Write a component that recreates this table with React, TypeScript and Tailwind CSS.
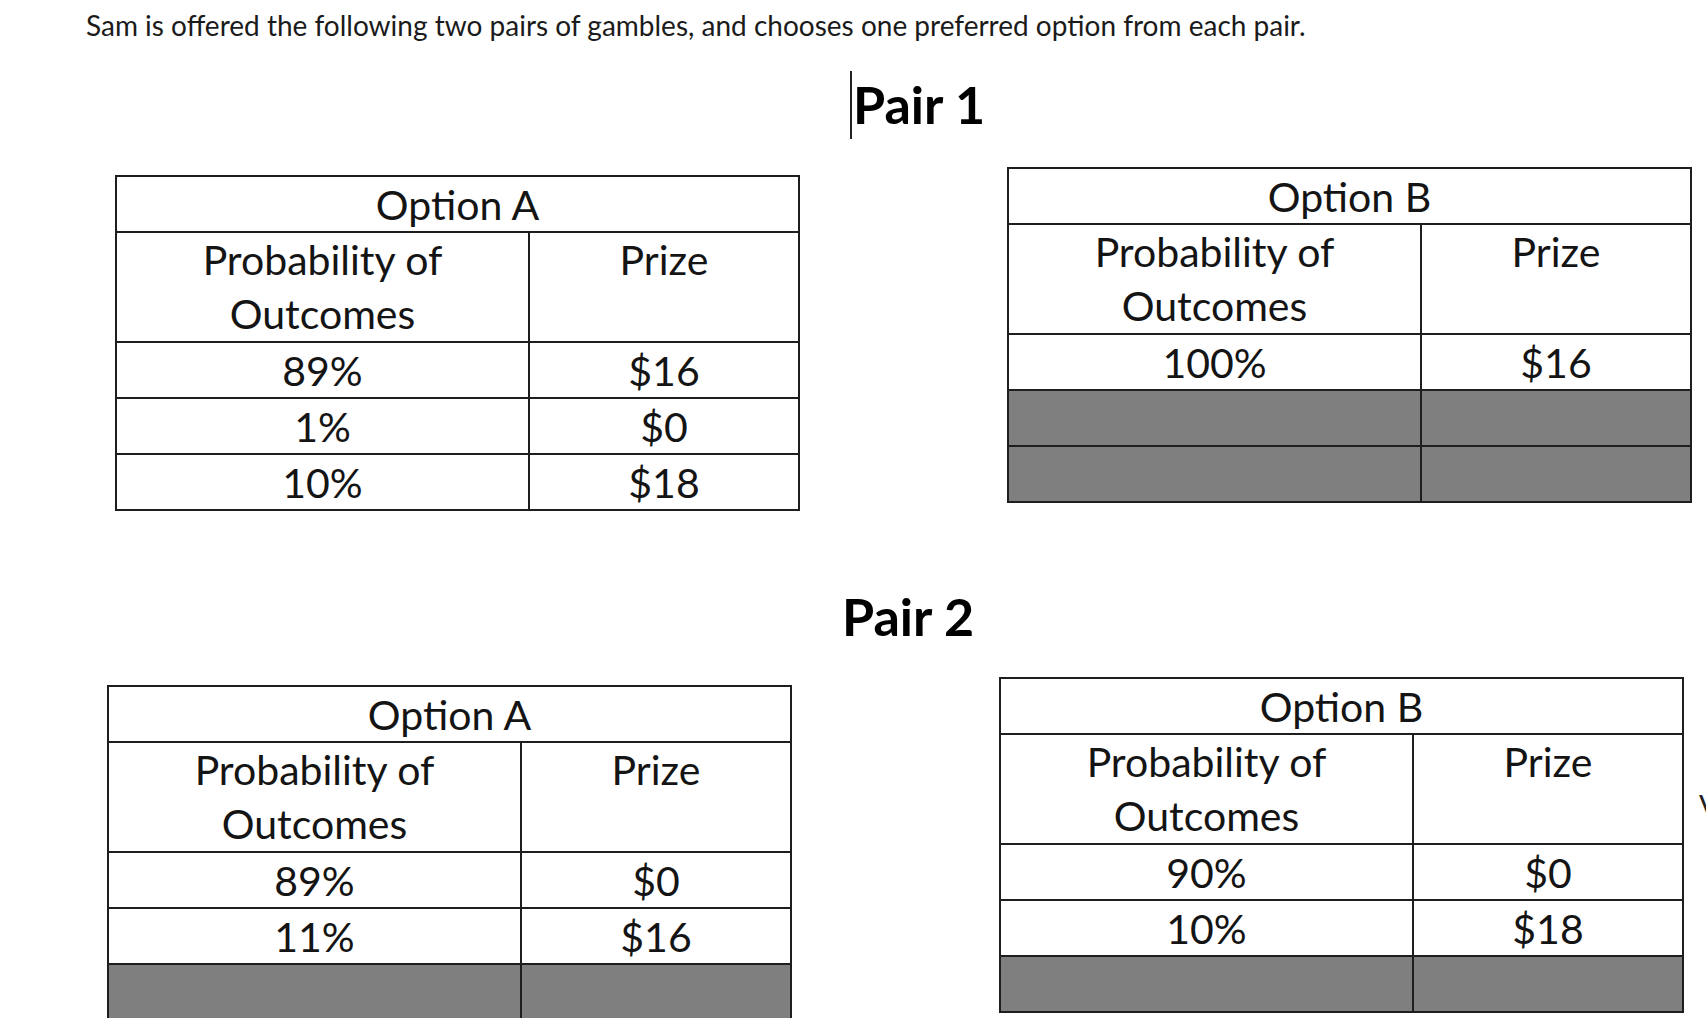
import React from "react";

type Row = { p: string; z: string; grey?: boolean };

function GambleTable({ title, rows, className }: { title: string; rows: Row[]; className?: string }) {
  return (
    <div
      className={`w-[685px] shrink-0 border-2 border-[#1e1e1e] text-[#141414] text-[41px] font-['Lato',sans-serif] ${className ?? ""}`}
    >
      <div className="h-[56px] flex items-center justify-center border-b-2 border-[#1e1e1e] leading-none">
        {title}
      </div>
      <div className="flex h-[110px] border-b-2 border-[#1e1e1e]">
        <div className="w-[413px] border-r-2 border-[#1e1e1e] text-center leading-[54px]">
          Probability of
          <br />
          Outcomes
        </div>
        <div className="flex-1 text-center leading-[54px]">Prize</div>
      </div>
      {rows.map((r, i) => (
        <div
          key={i}
          className={`flex ${i < rows.length - 1 ? "h-[56px] border-b-2 border-[#1e1e1e]" : "h-[54px]"} ${
            r.grey ? "bg-[#7f7f7f]" : "bg-white"
          }`}
        >
          <div className="w-[413px] border-r-2 border-[#1e1e1e] flex items-center justify-center leading-none">
            {r.p}
          </div>
          <div className="flex-1 flex items-center justify-center leading-none">{r.z}</div>
        </div>
      ))}
    </div>
  );
}

export default function App() {
  return (
    <div className="relative w-[1706px] h-[1018px] overflow-hidden bg-white text-[#111]">
      <p className="pt-[8px] pl-[86px] text-[28px] leading-[34px] font-['Lato',sans-serif] text-[#1b1b1b]">
        Sam is offered the following two pairs of gambles, and chooses one preferred option from each pair.
      </p>

      <div className="mt-[29px] flex items-start pl-[850px]">
        <div className="w-[2px] h-[68px] bg-[#222]" />
        <div className="mt-[7px] ml-[1px] text-[52px] leading-[52px] font-bold font-['Lato',sans-serif] text-black">
          Pair 1
        </div>
      </div>

      <div className="mt-[28px] flex items-start">
        <GambleTable
          className="mt-[8px] ml-[115px]"
          title="Option A"
          rows={[
            { p: "89%", z: "$16" },
            { p: "1%", z: "$0" },
            { p: "10%", z: "$18" },
          ]}
        />
        <GambleTable
          className="ml-[207px]"
          title="Option B"
          rows={[
            { p: "100%", z: "$16" },
            { p: "", z: "", grey: true },
            { p: "", z: "", grey: true },
          ]}
        />
      </div>

      <div className="mt-[79px] pl-[842px] text-[52px] leading-[52px] font-bold font-['Lato',sans-serif] text-black">
        Pair 2
      </div>

      <div className="mt-[35px] flex items-start">
        <GambleTable
          className="mt-[8px] ml-[107px]"
          title="Option A"
          rows={[
            { p: "89%", z: "$0" },
            { p: "11%", z: "$16" },
            { p: "", z: "", grey: true },
          ]}
        />
        <GambleTable
          className="ml-[207px]"
          title="Option B"
          rows={[
            { p: "90%", z: "$0" },
            { p: "10%", z: "$18" },
            { p: "", z: "", grey: true },
          ]}
        />
      </div>

      <span className="absolute left-[1699px] top-[790px] text-[30px] leading-none font-['Lato',sans-serif] text-[#222]">
        V
      </span>
    </div>
  );
}
